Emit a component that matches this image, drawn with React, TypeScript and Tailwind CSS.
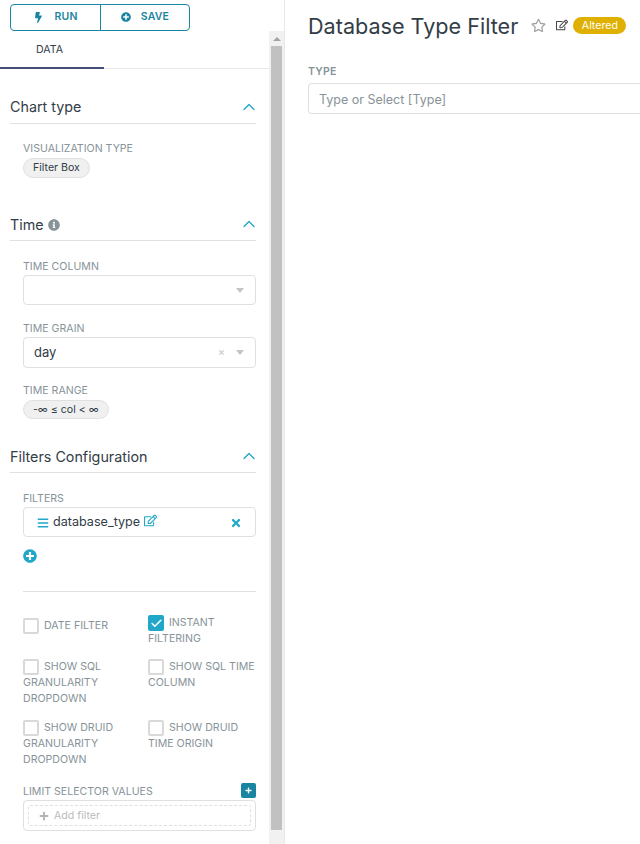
import React from 'react';
import { ChevronUp, Check as CheckIcon } from 'lucide-react';
import { FaBolt, FaPlusCircle, FaInfoCircle, FaBars, FaTimes, FaRegStar, FaRegEdit, FaPlus } from 'react-icons/fa';

const Label = ({ children, className = '' }: { children: React.ReactNode; className?: string }) => (
  <div className={`h-[16px] text-[10.6px] leading-[18px] text-[#879399] ${className}`}>{children}</div>
);

const Pill = ({ children, className = 'h-[20px]' }: { children: React.ReactNode; className?: string }) => (
  <span className={`inline-block rounded-full border border-[#e0e0e0] bg-[#f0f0f0] px-[9px] text-[10.6px] leading-[17px] text-[#323d47] ${className}`}>
    {children}
  </span>
);

const SectionHeader = ({ title, info, tight }: { title: string; info?: boolean; tight?: boolean }) => (
  <div className="flex h-[30px] items-start justify-between border-b border-[#e0e0e0]">
    <div className={`flex items-center gap-[4px] text-[14.3px] text-[#323d47] ${tight ? 'leading-[26px]' : 'leading-[27px]'}`}>
      {title}
      {info && <FaInfoCircle size={12} className="text-[#879399]" />}
    </div>
    <ChevronUp size={20} strokeWidth={1.6} className="mr-[-3px] mt-[3px] text-[#20a7c9]" />
  </div>
);

const Caret = () => <span className="h-0 w-0 border-x-[4px] border-t-[5px] border-x-transparent border-t-[#c4c4c4]" />;

const Check = ({ checked, children, className = '' }: { checked?: boolean; children: React.ReactNode; className?: string }) => (
  <div className={`text-[10.6px] leading-[16px] text-[#879399] ${className}`}>
    <span
      className={`mr-[5px] inline-flex h-[16px] w-[16px] items-center justify-center rounded-[2px] align-middle ${
        checked ? 'bg-[#20a7c9]' : 'border-2 border-[#d9d9d9]'
      }`}
    >
      {checked && <CheckIcon size={13} strokeWidth={3} className="text-white" />}
    </span>
    {children}
  </div>
);

export default function App() {
  return (
    <div className="flex h-[844px] w-[640px] overflow-hidden bg-white font-['Inter',sans-serif]">
      {/* left panel */}
      <div className="flex w-[285px] shrink-0 flex-col border-r border-[#e8e8e8]">
        <div className="flex h-[31px] shrink-0 pl-[10px] pt-[4px]">
          <button className="flex h-[27px] w-[91px] items-center justify-center gap-[10px] rounded-l-[4px] border border-[#1a85a0] pb-[1px] text-[10.5px] font-semibold tracking-[0.2px] text-[#1a85a0]">
            <FaBolt size={11} />
            RUN
          </button>
          <button className="ml-[-1px] flex h-[27px] w-[90px] items-center justify-center gap-[10px] rounded-r-[4px] border border-[#1a85a0] pb-[1px] text-[10.5px] font-semibold tracking-[0.2px] text-[#1a85a0]">
            <FaPlusCircle size={10} />
            SAVE
          </button>
        </div>

        <div className="flex min-h-0 flex-1">
          <div className="w-[269px] shrink-0">
            {/* tabs */}
            <div className="flex h-[38px] border-b border-[#e8e8e8]">
              <div className="mb-[-1px] flex h-[38px] w-[104px] items-start justify-center border-b-2 border-[#484e7a] pt-[10px] pr-[5px] text-[10.6px] leading-[18px] text-[#323d47]">
                DATA
              </div>
            </div>

            <div className="pl-[10px] pr-[13px]">
              {/* chart type */}
              <div className="pt-[25px]">
                <SectionHeader title="Chart type" tight />
                <div className="pl-[13px] pt-[16px]">
                  <Label>VISUALIZATION TYPE</Label>
                  <div className="mt-[2px] flex">
                    <Pill>Filter Box</Pill>
                  </div>
                </div>
              </div>

              {/* time */}
              <div className="pt-[33px]">
                <SectionHeader title="Time" info />
                <div className="pl-[13px] pt-[17px]">
                  <Label>TIME COLUMN</Label>
                  <div className="mt-[1px] flex h-[30px] items-center justify-end rounded-[4px] border border-[#e0e0e0] pr-[11px]">
                    <Caret />
                  </div>
                  <Label className="mt-[15px]">TIME GRAIN</Label>
                  <div className="mt-[1px] flex h-[31px] items-center rounded-[4px] border border-[#e0e0e0] pl-[10px] pr-[11px] text-[13px] text-[#323d47]">
                    <span className="flex-1">day</span>
                    <FaTimes size={7} className="mr-[11px] text-[#cfcfcf]" />
                    <Caret />
                  </div>
                  <Label className="mt-[14px]">TIME RANGE</Label>
                  <div className="mt-[2px] flex">
                    <Pill className="h-[19px]">-∞ ≤ col &lt; ∞</Pill>
                  </div>
                </div>
              </div>

              {/* filters configuration */}
              <div className="pt-[24px]">
                <SectionHeader title="Filters Configuration" />
                <div className="pl-[13px] pt-[17px]">
                  <Label>FILTERS</Label>
                  <div className="mt-[1px] flex h-[30px] items-center rounded-[4px] border border-[#e0e0e0] pl-[13px] pr-[13px] pt-[1px] text-[12.6px] text-[#323d47]">
                    <FaBars size={12} className="mr-[4px] text-[#20a7c9]" />
                    <span className="flex-1">
                      database_type
                      <FaRegEdit size={13} className="ml-[4px] inline align-[-1px] text-[#20a7c9]" />
                    </span>
                    <FaTimes size={12} className="text-[#20a7c9]" />
                  </div>
                  <FaPlusCircle size={14} className="mt-[12px] text-[#20a7c9]" />
                  <div className="mt-[28px] border-t border-[#e0e0e0]" />

                  {/* checkbox grid */}
                  <div className="mt-[23px] grid grid-cols-[125px_108px] gap-y-[12px]">
                    <div className="pt-[3px]">
                      <Check>DATE FILTER</Check>
                    </div>
                    <Check checked>INSTANT FILTERING</Check>
                    <Check>SHOW SQL GRANULARITY DROPDOWN</Check>
                    <Check>SHOW SQL TIME COLUMN</Check>
                    <Check className="mt-[1px]">SHOW DRUID GRANULARITY DROPDOWN</Check>
                    <Check className="mt-[1px]">SHOW DRUID TIME ORIGIN</Check>
                  </div>

                  {/* limit selector */}
                  <div className="mt-[15px] flex items-start justify-between">
                    <Label>LIMIT SELECTOR VALUES</Label>
                    <span className="flex h-[15px] w-[15px] items-center justify-center rounded-[2px] bg-[#1a85a0]">
                      <FaPlus size={7} className="text-white" />
                    </span>
                  </div>
                  <div className="mt-[1px] rounded-[4px] border border-[#e0e0e0] p-[4px]">
                    <div className="flex h-[21px] items-center rounded-[2px] border border-dashed border-[#e0e0e0] pl-[10px] text-[10.6px] text-[#bbbbbb]">
                      <FaPlus size={10} className="mr-[5px] text-[#b3b3b3]" />
                      Add filter
                    </div>
                  </div>
                </div>
              </div>
            </div>
          </div>

          {/* scrollbar */}
          <div className="w-[15px] shrink-0 bg-[#f1f1f1]">
            <div className="flex h-[15px] items-center justify-center">
              <span className="h-0 w-0 border-x-[4px] border-b-[4px] border-x-transparent border-b-[#a3a3a3]" />
            </div>
            <div className="mx-[2px] h-[784px] bg-[#c1c1c1]" />
          </div>
        </div>
      </div>

      {/* right panel */}
      <div className="min-w-0 flex-1 pl-[23px]">
        <div className="flex h-[51px] items-center whitespace-nowrap">
          <span className="text-[21.6px] leading-[28px] text-[#323d47]">Database Type Filter</span>
          <FaRegStar size={15} className="ml-[13px] text-[#a3a3a3]" />
          <FaRegEdit size={12} className="mb-[2px] ml-[10px] text-[#444]" />
          <span className="ml-[5px] h-[17px] rounded-full bg-[#e0b000] px-[8.5px] text-[10.6px] leading-[17px] text-white">Altered</span>
        </div>
        <div className="mt-[12px] pt-[1px] text-[10.5px] font-semibold leading-[16px] tracking-[0.2px] text-[#879399]">TYPE</div>
        <div className="mt-[3px] flex h-[31px] w-[340px] items-center rounded-l-[4px] border border-r-0 border-[#e0e0e0] pl-[10px] pt-[3px] text-[12.5px] text-[#879399]">
          Type or Select [Type]
        </div>
      </div>
    </div>
  );
}
